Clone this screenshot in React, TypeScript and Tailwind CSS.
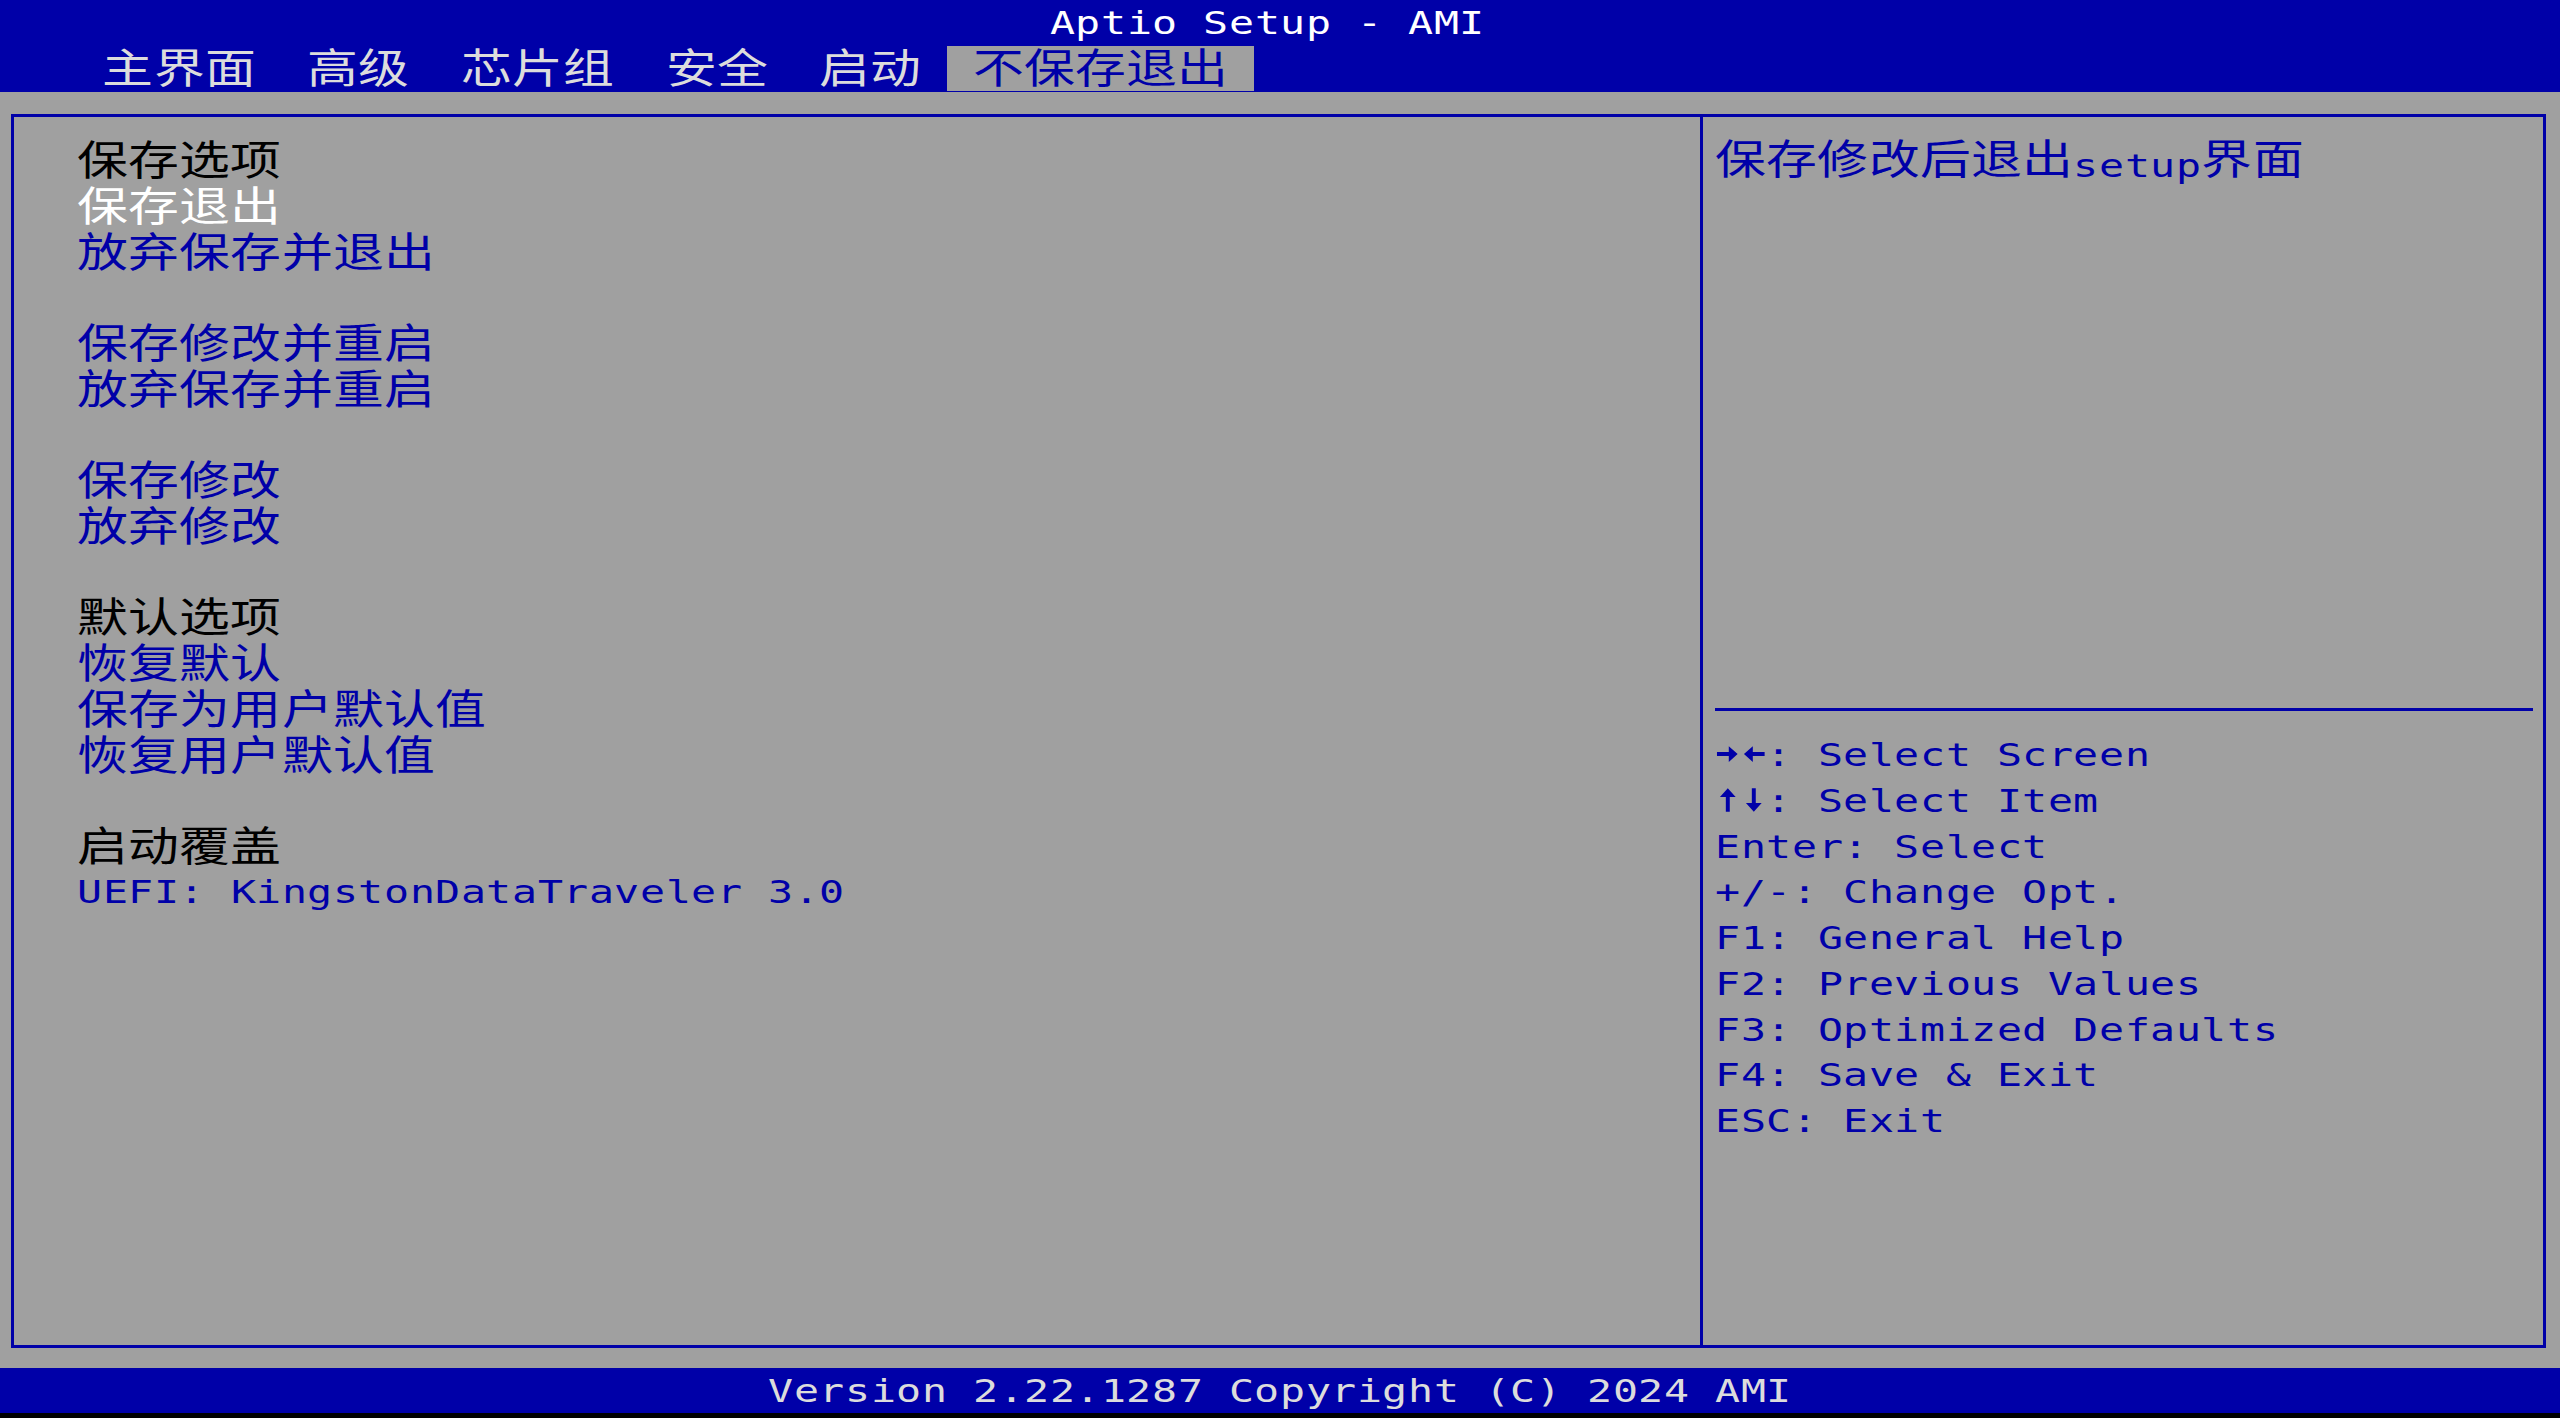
import React from "react";

// BIOS text screen: 100 x 31 character cells (25.6px x 45.74px)

function isWide(ch: string) {
  return ch.charCodeAt(0) >= 0x2e80;
}

const arrows: Record<string, string> = {
  "→": "2,10 14,10 14,4 23,12 14,20 14,14 2,14",
  "←": "24,10 12,10 12,4 3,12 12,20 12,14 24,14",
  "↑": "11,24 11,9 5,9 13,0 21,9 15,9 15,24",
  "↓": "11,0 11,15 5,15 13,24 21,15 15,15 15,0",
};

function Txt({ text, className = "" }: { text: string; className?: string }) {
  return (
    <span className={`inline-flex items-baseline ${className}`}>
      {Array.from(text).map((ch, i) => {
        if (arrows[ch]) {
          return (
            <svg key={i} width="25.6" height="24" viewBox="0 0 26 24" className="shrink-0">
              <polygon points={arrows[ch]} fill="currentColor" />
            </svg>
          );
        }
        return isWide(ch) ? (
          <span
            key={i}
            className="w-[51.2px] shrink-0 flex justify-center font-['Noto_Sans_CJK_SC',sans-serif] text-[41px] leading-none"
          >
            <span className="inline-block scale-x-[1.24] -translate-y-[3px]">{ch}</span>
          </span>
        ) : (
          <span
            key={i}
            className="w-[25.6px] shrink-0 flex justify-center font-['DejaVu_Sans_Mono',monospace] text-[32px] leading-none"
          >
            <span className="inline-block scale-x-[1.3] whitespace-pre">{ch}</span>
          </span>
        );
      })}
    </span>
  );
}

function Row({ children, className = "" }: { children?: React.ReactNode; className?: string }) {
  return <div className={`h-[45.74px] flex items-center ${className}`}>{children}</div>;
}

const tabs = ["主界面", "高级", "芯片组", "安全", "启动"];

type Item = { label: string; kind: "head" | "item" | "sel" | "gap" };

const menu: Item[] = [
  { label: "保存选项", kind: "head" },
  { label: "保存退出", kind: "sel" },
  { label: "放弃保存并退出", kind: "item" },
  { label: "", kind: "gap" },
  { label: "保存修改并重启", kind: "item" },
  { label: "放弃保存并重启", kind: "item" },
  { label: "", kind: "gap" },
  { label: "保存修改", kind: "item" },
  { label: "放弃修改", kind: "item" },
  { label: "", kind: "gap" },
  { label: "默认选项", kind: "head" },
  { label: "恢复默认", kind: "item" },
  { label: "保存为用户默认值", kind: "item" },
  { label: "恢复用户默认值", kind: "item" },
  { label: "", kind: "gap" },
  { label: "启动覆盖", kind: "head" },
  { label: "UEFI: KingstonDataTraveler 3.0", kind: "item" },
];

const keys = [
  "→←: Select Screen",
  "↑↓: Select Item",
  "Enter: Select",
  "+/-: Change Opt.",
  "F1: General Help",
  "F2: Previous Values",
  "F3: Optimized Defaults",
  "F4: Save & Exit",
  "ESC: Exit",
];

export default function App() {
  return (
    <div className="w-[2560px] h-[1418px] bg-[#a0a0a0] flex flex-col overflow-hidden">
      {/* Title + tabs */}
      <div className="bg-[#0000a8] h-[91.5px] flex flex-col">
        <Row className="pl-[1049.6px] text-white">
          <Txt text="Aptio Setup - AMI" />
        </Row>
        <div className="h-[45.74px] flex items-stretch pl-[76.8px] text-[#dcdcdc]">
          {tabs.map((t) => (
            <div key={t} className="flex items-center px-[25.6px]">
              <Txt text={t} />
            </div>
          ))}
          <div className="flex items-center px-[25.6px] bg-[#a0a0a0] text-[#0000a8]">
            <Txt text="不保存退出" />
          </div>
        </div>
      </div>

      {/* Main box */}
      <div className="h-[1276.5px] pt-[22px] pl-[11px]">
        <div className="w-[2535px] h-[1234px] border-[3px] border-[#0000a8] flex">
          {/* Left panel */}
          <div className="w-[1689px] h-full border-r-[3px] border-[#0000a8] pt-[21.2px] pl-[62.8px]">
            {menu.map((m, i) => (
              <Row
                key={i}
                className={
                  m.kind === "head"
                    ? "text-black"
                    : m.kind === "sel"
                    ? "text-white"
                    : "text-[#0000a8]"
                }
              >
                {m.label && <Txt text={m.label} />}
              </Row>
            ))}
          </div>

          {/* Right panel */}
          <div className="flex-1 pt-[21.2px] pl-[12px] pr-[10px] text-[#0000a8]">
            <div className="h-[548.9px]">
              <Row>
                <Txt text="保存修改后退出setup界面" />
              </Row>
            </div>
            <Row>
              <div className="w-full h-[3px] bg-[#0000a8]" />
            </Row>
            {keys.map((k) => (
              <Row key={k}>
                <Txt text={k} />
              </Row>
            ))}
          </div>
        </div>
      </div>

      {/* Footer */}
      <div className="h-[45px] bg-[#0000a8] flex items-center pl-[768px] text-[#dcdcdc]">
        <Txt text="Version 2.22.1287 Copyright (C) 2024 AMI" />
      </div>
      <div className="flex-1 bg-black" />
    </div>
  );
}
